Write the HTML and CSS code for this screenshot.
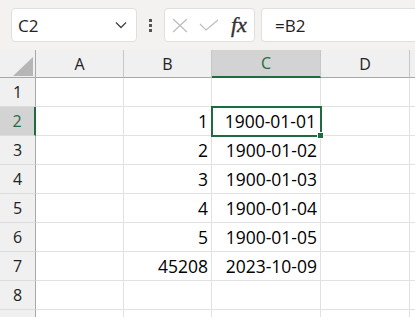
FILE: index.html
```html
<!DOCTYPE html>
<html lang="en">
<head>
    <meta charset="UTF-8">
    <title>Sheet</title>
    <link rel="stylesheet" href="styles.css">
</head>
<body>

    <!-- Formula bar -->
    <div class="toolbar">
        <div class="namebox">
            <span>C2</span>
            <svg class="chevron" width="12" height="8" viewBox="0 0 12 8"><path d="M1 1.5 L6 6.5 L11 1.5" fill="none" stroke="#444" stroke-width="1.3"/></svg>
        </div>
        <div class="dots"><i></i><i></i><i></i></div>
        <div class="fxbox">
            <svg width="16" height="15" viewBox="0 0 16 15"><path d="M1 1 L15 14 M15 1 L1 14" stroke="#bdbdbd" stroke-width="1.2"/></svg>
            <svg width="20" height="12" viewBox="0 0 20 12"><path d="M1 5 L7 11 L19 1" fill="none" stroke="#bdbdbd" stroke-width="1.2"/></svg>
            <span class="fx">fx</span>
        </div>
        <div class="formula">=B2</div>
    </div>

    <!-- Grid -->
    <div class="sheet">
        <div class="corner"><span class="tri"></span></div>
        <div class="colhead">A</div>
        <div class="colhead">B</div>
        <div class="colhead active">C</div>
        <div class="colhead">D</div>
        <div class="colhead"></div>

        <div class="rowhead">1</div><div class="cell"></div><div class="cell"></div><div class="cell"></div><div class="cell"></div><div class="cell"></div>
        <div class="rowhead active">2</div><div class="cell"></div><div class="cell num">1</div><div class="cell num selected">1900-01-01<span class="handle"></span></div><div class="cell"></div><div class="cell"></div>
        <div class="rowhead">3</div><div class="cell"></div><div class="cell num">2</div><div class="cell num">1900-01-02</div><div class="cell"></div><div class="cell"></div>
        <div class="rowhead">4</div><div class="cell"></div><div class="cell num">3</div><div class="cell num">1900-01-03</div><div class="cell"></div><div class="cell"></div>
        <div class="rowhead">5</div><div class="cell"></div><div class="cell num">4</div><div class="cell num">1900-01-04</div><div class="cell"></div><div class="cell"></div>
        <div class="rowhead">6</div><div class="cell"></div><div class="cell num">5</div><div class="cell num">1900-01-05</div><div class="cell"></div><div class="cell"></div>
        <div class="rowhead">7</div><div class="cell"></div><div class="cell num">45208</div><div class="cell num">2023-10-09</div><div class="cell"></div><div class="cell"></div>
        <div class="rowhead">8</div><div class="cell"></div><div class="cell"></div><div class="cell"></div><div class="cell"></div><div class="cell"></div>
        <div class="rowhead"></div><div class="cell"></div><div class="cell"></div><div class="cell"></div><div class="cell"></div><div class="cell"></div>
    </div>

</body>
</html>
```

FILE: styles.css
```css
body {
    margin: 0;
    font-family: "Open Sans", "Noto Sans", sans-serif;
    background: #fff;
    color: #000;
    overflow: hidden;
}

.toolbar {
    display: flex;
    height: 50px;
    box-sizing: border-box;
    padding: 8px 0 8px 11px;
    background: #f3f2f1;
}

.namebox,
.fxbox,
.formula {
    height: 34px;
    box-sizing: border-box;
    background: #fff;
    border: 1px solid #e1dfdd;
    border-radius: 4px;
    display: flex;
    align-items: center;
}

.namebox {
    width: 126px;
    padding: 0 6px 0 6px;
    justify-content: space-between;
    font-size: 17px;
    color: #222;
}

.chevron {
    margin-right: 3px;
}

.dots {
    width: 27px;
    display: flex;
    flex-direction: column;
    align-items: center;
    justify-content: center;
    gap: 2px;
}

.dots i {
    width: 3px;
    height: 3px;
    background: #555;
}

.fxbox {
    width: 91px;
    padding: 0 6px 0 7px;
    gap: 11px;
}

.fx {
    font-family: "Liberation Serif", "DejaVu Serif", serif;
    font-style: italic;
    font-size: 22px;
    color: #333;
    margin-left: 1px;
    -webkit-text-stroke: 0.4px #333;
}

.formula {
    flex: 1;
    margin-left: 6px;
    border-right: none;
    border-radius: 4px 0 0 4px;
    padding-left: 13px;
    font-size: 17px;
    color: #222;
}

.sheet {
    display: grid;
    grid-template-columns: 36px 88px 88px 109px 89px 1fr;
    grid-template-rows: 28px repeat(9, 29px);
    font-size: 17.5px;
}

.corner {
    background: #f0f0f0;
    border-right: 1px solid #a8a8a8;
    border-bottom: 1px solid #a8a8a8;
    position: relative;
}

.tri {
    position: absolute;
    right: 2px;
    bottom: 1px;
    width: 0;
    height: 0;
    border-left: 20px solid transparent;
    border-bottom: 19px solid #b6b6b6;
}

.colhead {
    background: #f0f0f0;
    border-right: 1px solid #c6c6c6;
    border-bottom: 1px solid #a8a8a8;
    display: flex;
    align-items: center;
    justify-content: center;
    color: #222;
    font-size: 16px;
}

.colhead.active {
    background: #d3d3d3;
    border-bottom: 2px solid #1e6b40;
    color: #1e6b40;
}

.rowhead {
    background: #f0f0f0;
    border-right: 1px solid #a8a8a8;
    border-bottom: 1px solid #dcdcdc;
    display: flex;
    align-items: center;
    justify-content: center;
    color: #222;
    font-size: 16px;
}

.rowhead.active {
    background: #d3d3d3;
    border-right: 2px solid #1e6b40;
    color: #1e6b40;
}

.cell {
    border-right: 1px solid #e1e1e1;
    border-bottom: 1px solid #e1e1e1;
    display: flex;
    align-items: center;
    padding: 0 3px;
    white-space: nowrap;
}

.num {
    justify-content: flex-end;
}

.selected {
    position: relative;
    outline: 2px solid #1e6b40;
    outline-offset: -1px;
    padding-right: 4px;
}

.handle {
    position: absolute;
    right: -4px;
    bottom: -4px;
    width: 5px;
    height: 5px;
    background: #1e6b40;
    border: 1px solid #fff;
}
```
